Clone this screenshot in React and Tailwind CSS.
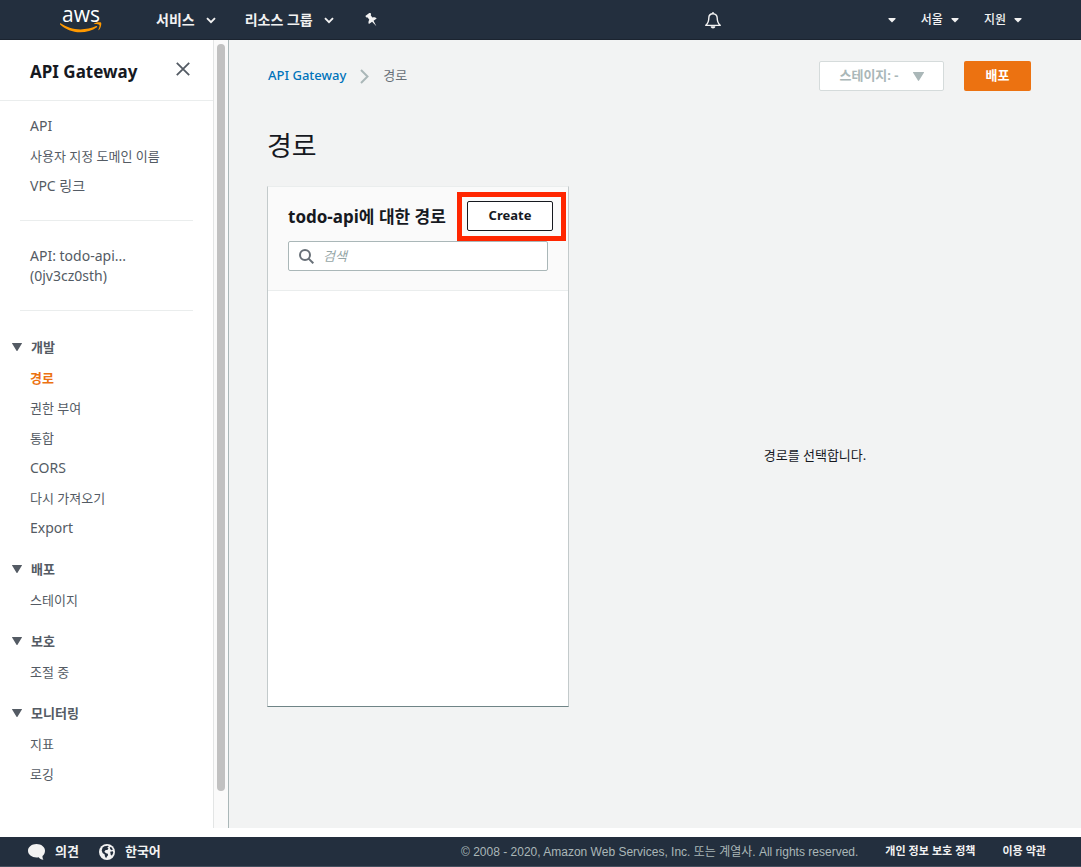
import React from "react";

const SANS = "font-['Noto_Sans','Noto_Sans_CJK_KR',sans-serif]";
const ARIAL = "font-['Liberation_Sans','Noto_Sans_CJK_KR',sans-serif]";

const sections = [
  { title: "개발", items: ["경로", "권한 부여", "통합", "CORS", "다시 가져오기", "Export"] },
  { title: "배포", items: ["스테이지"] },
  { title: "보호", items: ["조절 중"] },
  { title: "모니터링", items: ["지표", "로깅"] },
];

function Chevron({ className }) {
  return (
    <svg viewBox="0 0 10 7" className={className} fill="none" stroke="currentColor" strokeWidth="1.900" aria-hidden="true">
      <path d="M1 1.200 5 5.200 9 1.200" />
    </svg>
  );
}

function Caret({ className }) {
  return (
    <svg viewBox="0 0 8 5" className={className} fill="currentColor" aria-hidden="true">
      <path d="M.5 0h7v1L4 4.500.5 1z" />
    </svg>
  );
}

function Triangle({ className }) {
  return (
    <svg viewBox="0 0 10 8" className={className} fill="currentColor" aria-hidden="true">
      <path d="M.4 0h9.200c.4 0 .5.3.3.600L5.500 7.700c-.3.400-.7.400-1 0L.1.600C-.1.300 0 0 .4 0z" />
    </svg>
  );
}

function Logo() {
  return (
    <a href="#home" aria-label="aws" className="flex w-[42px] flex-col items-center text-white">
      <span className="font-['Open_Sans',sans-serif] text-[21px] font-medium leading-4">aws</span>
      <svg viewBox="0 0 42 11" className="h-[11px] w-[42px]" aria-hidden="true">
        <path d="M.6 1.200C6 4.900 13 7.400 20.500 7.400c5.300 0 11-1.200 15.700-3.300.8-.3 1.400.5.7 1.100C32.500 8.600 26 10.200 20.300 10.200 12.400 10.200 5.300 7.300.1 2.400c-.5-.5 0-1.200.5-1.200z" fill="#f90" />
        <path d="M34.200 2.100c-.5.300-.4-.3 0-.6C35.800.3 40.500-.1 41.100.7c.6.800-.2 5.400-2.200 7.300-.3.300-.7.100-.5-.2.500-1.300 1.500-4.200 1-4.900-.5-.8-3.600-.9-5.200-.8z" fill="#f90" />
      </svg>
    </a>
  );
}

function Header() {
  return (
    <header className="flex h-10 shrink-0 items-center border-b border-[#1b2430] bg-[#232f3e] pl-[60px] pr-[59px] text-[#f2f2f2]">
      <Logo />
      <nav className="ml-[54px] flex items-center text-[14px] font-bold">
        <button className="flex items-center gap-[11px]">서비스<Chevron className="mt-[2px] h-[7px] w-[10px]" /></button>
        <button className="ml-[29px] flex items-center gap-[11px]">리소스 그룹<Chevron className="mt-[2px] h-[7px] w-[10px]" /></button>
        <button aria-label="고정" className="ml-[31px]">
          <svg viewBox="0 0 14 14" className="h-[14px] w-[14px]" fill="currentColor" aria-hidden="true">
            <g transform="translate(6.300 6.200) rotate(-36)">
              <path d="M-2.900-6.200h5.800v1.900L1.900-3.600v2.800C3.500-.2 4.600.9 4.800 2.600H.9L0 8.600-.9 2.600h-3.900C-4.600.9-3.500-.2-1.900-.8v-2.800l-1-.7z" />
            </g>
          </svg>
        </button>
      </nav>
      <button aria-label="알림" className="ml-auto mr-[167px] mt-[2px]">
        <svg viewBox="0 0 16 17" className="h-[17px] w-4" fill="none" stroke="currentColor" strokeWidth="1.400" strokeLinejoin="round" aria-hidden="true">
          <path d="M8 1.800c-2.700 0-4.200 2-4.200 4.300 0 4-1 5.600-3 7.300h14.400c-2-1.700-3-3.300-3-7.300 0-2.300-1.500-4.300-4.200-4.300z" />
          <path d="M8 0v1.800" />
          <path d="M5.700 14.200h4.600c0 3-4.600 3-4.600 0z" fill="currentColor" stroke="none" />
        </svg>
      </button>
      <div className="flex items-center gap-[25px] text-[12px] font-medium">
        <button aria-label="계정"><Caret className="mt-[2px] h-[5px] w-2" /></button>
        <button className="flex items-center gap-2">서울<Caret className="mt-[2px] h-[5px] w-2" /></button>
        <button className="flex items-center gap-2">지원<Caret className="mt-[2px] h-[5px] w-2" /></button>
      </div>
    </header>
  );
}

function NavLink({ children, active }) {
  const latin = /^[A-Za-z]/.test(children);
  return (
    <li className={latin ? "flex h-5 items-center text-[14px]" : "flex h-5 items-center text-[13px] leading-[18px]"}>
      <a href="#nav" className={active ? "font-bold text-[#ec7211]" : ""}>{children}</a>
    </li>
  );
}

function Sidebar() {
  return (
    <aside className="flex w-[229px] shrink-0 border-r border-[#aab7b8]">
      <div className="min-w-0 flex-1 bg-white pb-11">
        <div className="flex h-[61px] items-center justify-between border-b border-[#eaeded] pl-[30px] pr-[23px]">
          <h2 className="pt-1 text-[17px] font-bold text-[#16191f]">API Gateway</h2>
          <button aria-label="닫기" className="pb-[2px] text-[#545b64]">
            <svg viewBox="0 0 14 14" className="h-[14px] w-[14px]" fill="none" stroke="currentColor" strokeWidth="1.800" aria-hidden="true">
              <path d="M.8.8 13.200 13.200M13.200.8.8 13.200" />
            </svg>
          </button>
        </div>
        <nav className="px-5 pt-[15px] text-[13px] leading-5 text-[#545b64]">
          <ul className="flex flex-col gap-[10px] pl-[10px]">
            <NavLink>API</NavLink>
            <NavLink>사용자 지정 도메인 이름</NavLink>
            <NavLink>VPC 링크</NavLink>
          </ul>
          <hr className="mt-6 border-[#eaeded]" />
          <p className="mt-[25px] pl-[10px] text-[14px] leading-5">API: todo-api...<br />(0jv3cz0sth)</p>
          <hr className="mt-6 border-[#eaeded]" />
          <div className="mt-[26px] flex flex-col gap-[21px]">
            {sections.map((s) => (
              <section key={s.title}>
                <button className="-ml-2 flex h-5 items-center gap-[9px] font-bold">
                  <Triangle className="h-2 w-[10px]" />
                  {s.title}
                </button>
                <ul className="mt-[11px] flex flex-col gap-[10px] pl-[10px]">
                  {s.items.map((i) => (
                    <NavLink key={i} active={i === "경로"}>{i}</NavLink>
                  ))}
                </ul>
              </section>
            ))}
          </div>
        </nav>
      </div>
      <div className="flex w-[15px] border-l border-[#e3e5e5] bg-[#fafafa] pb-[37px] pl-[3px] pt-1">
        <div className="w-2 rounded-full bg-[#c1c1c1]" />
      </div>
    </aside>
  );
}

function RoutesCard() {
  return (
    <section className="flex h-[521px] w-[302px] shrink-0 flex-col border border-x-[#c3cacb] border-b-[#6f8486] border-t-[#eaeded] bg-white">
      <div className="border-b border-[#eaeded] bg-[#fafafa] pb-[19px] pl-5 pr-[15px] pt-[14px]">
        <div className="flex items-center justify-between">
          <h2 className="whitespace-nowrap pt-[2px] text-[17px] font-bold leading-7 text-[#16191f]">todo-api에 대한 경로</h2>
          <div className="relative">
            <button className="block h-[30px] w-[86px] rounded-[2px] border border-[#16191f] bg-white text-[13px] font-bold text-[#16191f]">Create</button>
            <div className="pointer-events-none absolute -inset-[10px] -right-[13px] -top-[9px] border-[5px] border-[#ff2600]" />
          </div>
        </div>
        <label className="mr-[5px] mt-[10px] flex h-[30px] items-center rounded-[2px] border border-[#aab7b8] bg-white pl-[10px]">
          <svg viewBox="0 0 15 15" className="h-[15px] w-[15px] shrink-0 text-[#687078]" fill="none" stroke="currentColor" strokeWidth="2" aria-hidden="true">
            <circle cx="6" cy="6" r="5" />
            <path d="m9.600 9.600 4.700 4.700" />
          </svg>
          <input type="text" aria-label="검색" placeholder="검색" className="ml-[9px] min-w-0 flex-1 bg-transparent pt-[2px] text-[13px] outline-none placeholder:italic placeholder:text-[#95a5a6]" />
        </label>
      </div>
    </section>
  );
}

function Main() {
  return (
    <main className="flex min-w-0 flex-1 flex-col bg-[#f2f3f3] pl-[38px] pr-10 pt-[21px]">
      <div className="flex h-[30px] items-center justify-between pr-[10px]">
        <nav aria-label="경로 탐색" className="flex items-center pl-[1px] text-[13px] text-[#687078]">
          <a href="#gateway" className="font-medium text-[#0073bb]">API Gateway</a>
          <svg viewBox="0 0 9 15" className="mx-[14px] h-[15px] w-[9px] text-[#aab7b8]" fill="none" stroke="currentColor" strokeWidth="2" aria-hidden="true">
            <path d="m1 1 6.500 6.500L1 14" />
          </svg>
          <span>경로</span>
        </nav>
        <div className="flex gap-5 text-[13px] font-bold">
          <button disabled className="flex h-[30px] w-[125px] items-center justify-center gap-[14px] rounded-[2px] border border-[#d5dbdb] bg-white text-[#aab7b8]">
            스테이지: -
            <Triangle className="h-[9px] w-[11px]" />
          </button>
          <button className="h-[30px] w-[67px] rounded-[2px] bg-[#ec7211] text-white">배포</button>
        </div>
      </div>
      <h1 className="mt-[37px] text-[27px] leading-9 text-[#16191f]">경로</h1>
      <div className="mt-[22px] flex gap-5">
        <RoutesCard />
        <div className="flex flex-1 items-center justify-center pt-[18px] text-[13px] text-[#16191f]">
          <p>경로를 선택합니다.</p>
        </div>
      </div>
    </main>
  );
}

function Footer() {
  return (
    <footer className={`mt-[9px] flex h-[30px] shrink-0 items-center justify-between border-b border-[#45505f] bg-[#232f3e] pl-7 pr-[35px] text-[#f2f2f2] ${ARIAL}`}>
      <div className="flex items-center text-[13px] font-bold">
        <button className="flex items-center gap-[10px]">
          <svg viewBox="0 0 17 16" className="h-4 w-[17px]" fill="currentColor" aria-hidden="true">
            <path d="M8.500 0C3.800 0 0 2.900 0 6.700s3.800 6.700 8.500 6.700c.8 0 1.500-.1 2.200-.2 1 1.300 2.500 2.300 4.800 2.600-.8-1-1.100-2.500-1-3.900C16.100 10.600 17 8.800 17 6.700 17 2.900 13.200 0 8.500 0z" />
          </svg>
          의견
        </button>
        <button className="ml-5 flex items-center gap-[10px]">
          <svg viewBox="0 0 16 16" className="h-4 w-4" aria-hidden="true">
            <circle cx="8" cy="8" r="8" fill="#f2f2f2" />
            <path d="M3.600 3.600 5.400 2.200l3.400-.4 1 1-1.600.8 1.300 1-1.200 1.300-1.700.2L5.400 7.700l1.700 1.500 1.700.6.300 1.500-1.300 1.400-.7 1.600-1.200-2-.2-1.700L3.600 8.900 2.700 6.600z" fill="#232f3e" />
            <path d="m10.800 3 1.900.5 1.200 1.900-1.300.9-1.500-1.200zM11.200 7.800l2.600-.6.500 1.500-1.300 2.700-1.200-.4z" fill="#232f3e" />
          </svg>
          한국어
        </button>
      </div>
      <div className="flex items-center gap-[27px] text-[12px]">
        <span className="text-[#aab7b8]">© 2008 - 2020, Amazon Web Services, Inc. 또는 계열사. All rights reserved.</span>
        <a href="#privacy" className="text-[11px] font-bold">개인 정보 보호 정책</a>
        <a href="#terms" className="text-[11px] font-bold">이용 약관</a>
      </div>
    </footer>
  );
}

export default function App() {
  return (
    <div className={`flex min-h-screen flex-col bg-white ${SANS}`}>
      <Header />
      <div className="flex flex-1">
        <Sidebar />
        <Main />
      </div>
      <Footer />
    </div>
  );
}
